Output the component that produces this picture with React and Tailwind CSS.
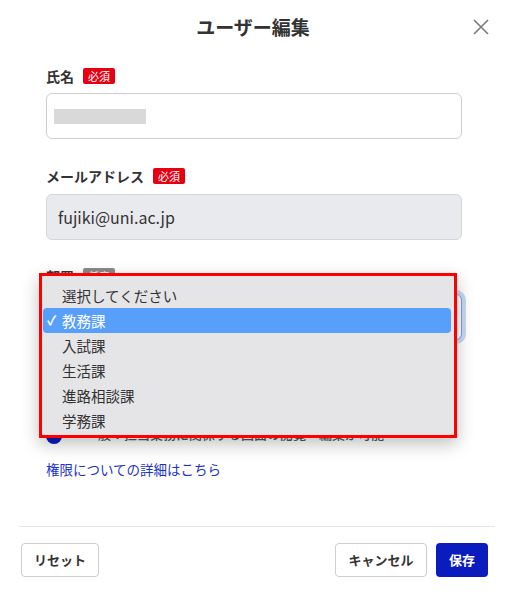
import React from "react";

const font = { fontFamily: '"Noto Sans CJK JP", "Noto Sans", sans-serif' };

function Badge({ children, grey }) {
  return (
    <span
      className={`inline-flex h-[16px] items-center rounded-[2px] px-[5px] text-[11px] leading-none text-white ${
        grey ? "bg-[#8a8a8a]" : "bg-[#e60012]"
      }`}
    >
      {children}
    </span>
  );
}

function Label({ children, badge, grey }) {
  return (
    <div className="flex h-[16px] items-center gap-[9px]">
      <span className="text-[14px] font-bold leading-none text-[#333]">{children}</span>
      <Badge grey={grey}>{badge}</Badge>
    </div>
  );
}

const options = ["選択してください", "教務課", "入試課", "生活課", "進路相談課", "学務課"];

export default function App() {
  return (
    <div className="relative flex h-[595px] w-[506px] flex-col overflow-hidden bg-white" style={font}>
      <div className="grid h-[54px] grid-cols-[1fr_auto_1fr] items-center">
        <div />
        <h1 className="text-[19px] font-bold leading-[26px] text-[#333]">ユーザー編集</h1>
        <div className="flex justify-end pr-[16px]">
          <svg width="18" height="18" viewBox="0 0 18 18" className="text-[#7a7a7a]">
            <path d="M2 2 L16 16 M16 2 L2 16" stroke="currentColor" strokeWidth="1.6" fill="none" />
          </svg>
        </div>
      </div>

      <div className="flex flex-col pl-[46px] pr-[44px]">
        <div className="mt-[14px]">
          <Label badge="必須">氏名</Label>
        </div>
        <div className="mt-[9px] flex h-[46px] items-center rounded-[6px] border border-[#cfcfcf] bg-white pl-[7px]">
          <div className="h-[15px] w-[92px] bg-[#d9d9d9]" />
        </div>

        <div className="mt-[29px]">
          <Label badge="必須">メールアドレス</Label>
        </div>
        <div className="mt-[10px] flex h-[46px] items-center rounded-[6px] border border-[#d6d6d9] bg-[#e9eaee] pl-[11px] text-[16px] text-[#333]">
          fujiki@uni.ac.jp
        </div>

        <div className="mt-[28px]">
          <Label badge="任意" grey>部署</Label>
        </div>
        <div className="mt-[10px] flex h-[46px] items-center rounded-[6px] border border-[#7aa2e8] bg-white ring-[4px] ring-[#c8d8f6]" />

        <div className="mt-[28px] h-[16px]" />
        <div className="mt-[10px] flex flex-col gap-[12px]">
          <div className="flex h-[20px] items-center gap-[23px]">
            <span className="h-[16px] w-[16px] rounded-full border-2 border-[#888]" />
          </div>
          <div className="flex h-[20px] items-center gap-[23px]">
            <span className="h-[16px] w-[16px] rounded-full bg-[#0a1cbd]" />
            <span className="translate-y-[-2px] text-[13px] font-medium text-[#555]">一般：担当業務に関係する画面の閲覧・編集が可能</span>
          </div>
        </div>

        <a className="mt-[13px] text-[13.5px] leading-[20px] text-[#1a33cc]">権限についての詳細はこちら</a>
      </div>

      <div className="mx-[19px] mr-[11px] mt-[47px] h-px bg-[#e4e4ea]" />

      <div className="mt-[16px] flex items-center pl-[21px] pr-[18px]">
        <button className="flex h-[34px] w-[78px] items-center justify-center rounded-[4px] border border-[#cfcfcf] bg-white text-[13px] font-bold text-[#333]">
          リセット
        </button>
        <div className="ml-auto flex gap-[9px]">
          <button className="flex h-[34px] w-[92px] items-center justify-center rounded-[4px] border border-[#cfcfcf] bg-white text-[13px] font-bold text-[#333]">
            キャンセル
          </button>
          <button className="flex h-[34px] w-[52px] items-center justify-center rounded-[4px] bg-[#0a1cbd] text-[13px] font-bold text-white">
            保存
          </button>
        </div>
      </div>

      <div className="absolute left-[39px] top-[273px] w-[418px] border-[3px] border-[#ff0000] bg-[#e5e5e7] pb-[2px] pl-[1px] pr-[3px] pt-[7px] shadow-[0_6px_16px_rgba(0,0,0,0.25)]">
        {options.map((o, i) => (
          <div
            key={o}
            className={`relative flex h-[25px] items-center rounded-[4px] pl-[19px] text-[14.5px] ${
              i === 1 ? "bg-[#589ffc] text-white" : "text-[#333]"
            }`}
          >
            {i === 1 && (
              <span className="absolute left-[4px] top-[5px] text-[13px] font-bold leading-[14px]">✓</span>
            )}
            {o}
          </div>
        ))}
      </div>
    </div>
  );
}
